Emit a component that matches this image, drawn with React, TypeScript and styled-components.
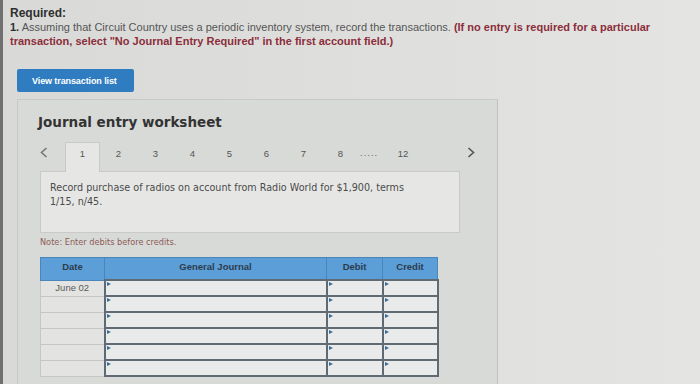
import React from 'react'
import styled, { createGlobalStyle } from 'styled-components'

const GlobalStyle = createGlobalStyle`
  html, body {
    margin: 0;
    padding: 0;
    background: #dcdddb;
    overflow: hidden;
  }
`

const Page = styled.div`
  display: flex;
  width: 700px;
  height: 384px;
  overflow: hidden;
  background: linear-gradient(90deg, #d9dad8 0%, #dfe0de 60%, #e4e5e3 100%);
`

const EdgeStrip = styled.div`
  width: 3px;
  flex-shrink: 0;
  background: #6f706f;
`

const Main = styled.div`
  flex: 1;
  display: flex;
  flex-direction: column;
  min-height: 0;
`

const Instructions = styled.div`
  flex-shrink: 0;
  width: 645px;
  padding: 6px 0 0 7px;
  font-family: "Liberation Sans", Arial, sans-serif;
  font-size: 11px;
  line-height: 14px;
  color: #555555;
`

const Heading = styled.div`
  font-size: 12px;
  font-weight: 700;
  color: #2f2f2f;
`

const Line = styled.p`
  margin: 0;
`

const Strong = styled.span`
  font-weight: 700;
  color: #2f2f2f;
`

const Warning = styled.span`
  font-weight: 700;
  color: #8c2d3a;
`

const ViewButton = styled.button`
  flex-shrink: 0;
  align-self: flex-start;
  margin: 21px 0 0 14px;
  width: 117px;
  height: 23px;
  border: none;
  border-radius: 2px;
  background: #2f7dc0;
  color: #ffffff;
  font-family: "Liberation Sans", Arial, sans-serif;
  font-size: 9px;
  font-weight: 700;
  letter-spacing: -0.1px;
  padding: 0;
  text-align: left;
  text-indent: 15px;
`

const Worksheet = styled.div`
  flex: 1 0 auto;
  margin: 7px 0 0 14px;
  width: 481px;
  background: #d8dad7;
  border-top: 1px solid #c8c9c7;
  border-left: 1px solid #c8c9c7;
  border-right: 1px solid #c2c3c1;
  padding: 0 0 0 22px;
  box-sizing: border-box;
`

const Title = styled.h2`
  margin: 13px 0 0 -2px;
  font-family: "DejaVu Sans", Verdana, sans-serif;
  font-size: 13.5px;
  font-weight: 700;
  line-height: 18px;
  color: #333333;
`

const TabRow = styled.div`
  display: flex;
  align-items: stretch;
  height: 29px;
  margin-top: 11px;
  font-family: "Liberation Sans", Arial, sans-serif;
  font-size: 9.5px;
  color: #555555;
`

const Arrow = styled.div<{ $w: number }>`
  width: ${({ $w }) => $w}px;
  display: flex;
  align-items: center;
  justify-content: center;
  padding-bottom: 9px;
  box-sizing: border-box;
`

const Tab = styled.div<{ $active?: boolean; $w?: number }>`
  width: ${({ $w }) => $w ?? 37}px;
  display: flex;
  align-items: center;
  justify-content: center;
  padding-bottom: 9px;
  box-sizing: border-box;
  position: relative;
  z-index: 1;
  margin-bottom: -1px;
  background: ${({ $active }) => ($active ? '#e6e7e5' : 'transparent')};
  border: 1px solid ${({ $active }) => ($active ? '#c9cac8' : 'transparent')};
  border-bottom: none;
`

const Dots = styled.div`
  width: 29px;
  display: flex;
  align-items: center;
  padding: 0 0 9px 1px;
  box-sizing: border-box;
  letter-spacing: 1px;
  color: #666;
`

const Prompt = styled.div`
  width: 420px;
  height: 62px;
  box-sizing: border-box;
  background: #e6e7e5;
  border: 1px solid #c9cac8;
  padding: 9px 30px 9px 9px;
  font-family: "DejaVu Sans", Verdana, sans-serif;
  font-size: 9.6px;
  line-height: 14px;
  color: #4a4a4a;
`

const Note = styled.div`
  margin-top: 4px;
  font-family: "DejaVu Sans", Verdana, sans-serif;
  font-size: 8.2px;
  line-height: 11px;
  color: #8d5a58;
`

const Table = styled.table`
  margin-top: 9px;
  border-collapse: collapse;
  table-layout: fixed;
  width: 393px;
  font-family: "Liberation Sans", Arial, sans-serif;
  font-size: 9.5px;
`

const HeadCell = styled.th<{ $w: number }>`
  width: ${({ $w }) => $w}px;
  height: 18px;
  padding: 0 0 3px;
  background: #5c9fd8;
  border: 1px solid #4b86bb;
  color: #2d3b4b;
  font-weight: 700;
  text-align: center;
  line-height: 12px;
`

const DateCell = styled.td`
  height: 14px;
  padding: 0;
  background: #e3e4e2;
  border: 1px solid #c6c7c5;
  color: #5a5a5a;
  text-align: center;
  vertical-align: top;
  line-height: 13px;
`

const InputCell = styled.td`
  height: 14px;
  padding: 0;
  background: #e9ebeb;
  border: 2px solid #5f6a74;
  position: relative;
`

const Marker = styled.span`
  position: absolute;
  left: 1px;
  top: 1px;
  width: 0;
  height: 0;
  border-top: 2px solid transparent;
  border-bottom: 2px solid transparent;
  border-left: 4px solid #3a6c98;
`

const Chevron = ({ dir }: { dir: 'left' | 'right' }) => (
  <svg width="8" height="11" viewBox="0 0 8 11">
    <path
      d={dir === 'left' ? 'M6.5 1 L1.5 5.5 L6.5 10' : 'M1.5 1 L6.5 5.5 L1.5 10'}
      fill="none"
      stroke={dir === 'left' ? '#777' : '#555'}
      strokeWidth="1.6"
    />
  </svg>
)

const rows = ['June 02', '', '', '', '', '']

const App: React.FunctionComponent = () => {
  return (
    <Page>
      <GlobalStyle />
      <EdgeStrip />
      <Main>
        <Instructions>
          <Heading>Required:</Heading>
          <Line>
            <Strong>1.</Strong> Assuming that Circuit Country uses a periodic inventory system, record the transactions.{' '}
            <Warning>
              (If no entry is required for a particular transaction, select "No Journal Entry Required" in the first account field.)
            </Warning>
          </Line>
        </Instructions>
        <ViewButton>View transaction list</ViewButton>
        <Worksheet>
          <Title>Journal entry worksheet</Title>
          <TabRow>
            <Arrow $w={26} style={{ marginLeft: -9 }}><Chevron dir="left" /></Arrow>
            <Tab $active $w={35} style={{ marginLeft: 8 }}>1</Tab>
            {[2, 3, 4, 5, 6, 7, 8].map((n) => (
              <Tab key={n}>{n}</Tab>
            ))}
            <Dots>.....</Dots>
            <Tab $w={30}>12</Tab>
            <Arrow $w={26} style={{ marginLeft: 40 }}><Chevron dir="right" /></Arrow>
          </TabRow>
          <Prompt>
            Record purchase of radios on account from Radio World for $1,900, terms 1/15, n/45.
          </Prompt>
          <Note>Note: Enter debits before credits.</Note>
          <Table>
            <thead>
              <tr>
                <HeadCell $w={63}>Date</HeadCell>
                <HeadCell $w={221}>General Journal</HeadCell>
                <HeadCell $w={55}>Debit</HeadCell>
                <HeadCell $w={54}>Credit</HeadCell>
              </tr>
            </thead>
            <tbody>
              {rows.map((d, i) => (
                <tr key={i}>
                  <DateCell>{d}</DateCell>
                  <InputCell><Marker /></InputCell>
                  <InputCell><Marker /></InputCell>
                  <InputCell><Marker /></InputCell>
                </tr>
              ))}
            </tbody>
          </Table>
        </Worksheet>
      </Main>
    </Page>
  )
}

export default App
